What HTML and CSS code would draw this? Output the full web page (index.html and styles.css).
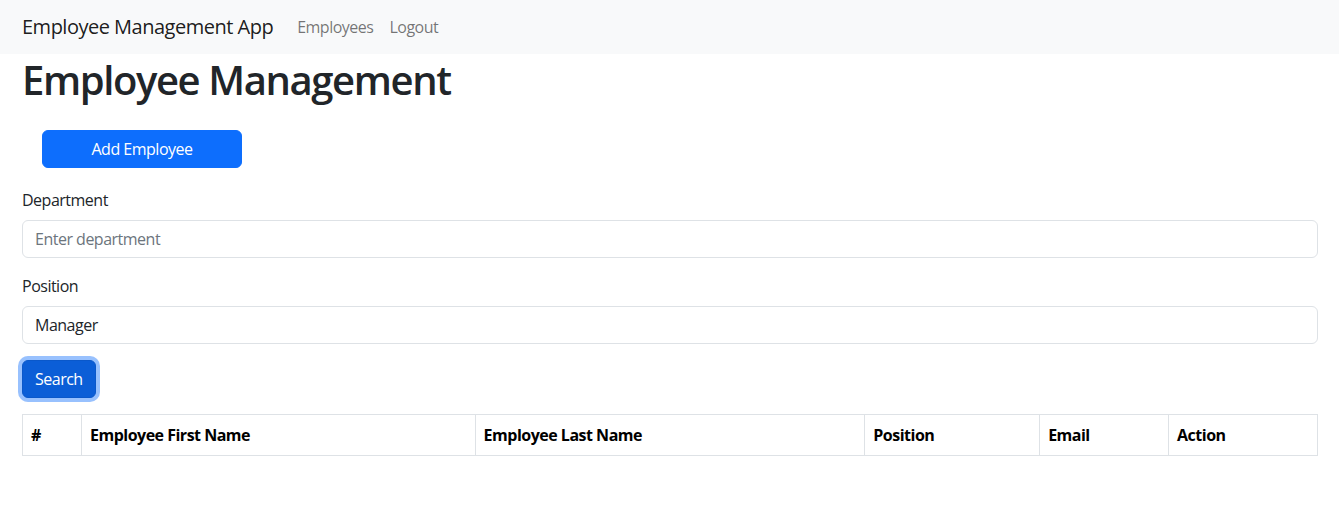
FILE: index.html
```html
<!DOCTYPE html>
<html lang="en">
<head>
<meta charset="utf-8">
<title>Employee Management App</title>
<link rel="stylesheet" href="styles.css">
</head>
<body>
<nav class="navbar">
  <span class="brand">Employee Management App</span>
  <a class="nav-link" href="#">Employees</a>
  <a class="nav-link" href="#">Logout</a>
</nav>
<main class="page">
  <h1 class="title">Employee Management</h1>
  <button class="btn btn-add" type="button">Add Employee</button>
  <div class="field">
    <label class="label" for="dept">Department</label>
    <input class="input" id="dept" type="text" placeholder="Enter department">
  </div>
  <div class="field">
    <label class="label" for="pos">Position</label>
    <input class="input" id="pos" type="text" value="Manager">
  </div>
  <button class="btn btn-search" type="button">Search</button>
  <table class="table">
    <thead>
      <tr>
        <th class="c-num">#</th>
        <th class="c-first">Employee First Name</th>
        <th class="c-last">Employee Last Name</th>
        <th class="c-pos">Position</th>
        <th class="c-email">Email</th>
        <th class="c-action">Action</th>
      </tr>
    </thead>
  </table>
</main>
</body>
</html>
```

FILE: styles.css
```css
* { box-sizing: border-box; }
html, body { margin: 0; padding: 0; }
body {
  font-family: "Open Sans", "Noto Sans", sans-serif;
  font-size: 16px;
  line-height: 1.5;
  letter-spacing: -0.5px;
  color: #212529;
  background: #fff;
}
.navbar {
  background: #f8f9fa;
  height: 54px;
  display: flex;
  align-items: center;
  padding: 0 22px;
}
.brand {
  font-size: 20px;
  letter-spacing: -0.5px;
  color: rgba(0,0,0,.9);
  margin-right: 16px;
  line-height: 30px;
}
.nav-link {
  color: rgba(0,0,0,.55);
  text-decoration: none;
  padding: 8px 8px;
  font-size: 16px;
}
.page {
  padding: 0 21px 0 22px;
}
.title {
  font-size: 40px;
  font-weight: 600;
  letter-spacing: -1.4px;
  line-height: 1.2;
  margin: 0 0 8px;
  padding: 2px 0 6px;
}
.btn {
  display: block;
  font-family: inherit;
  font-size: 16px;
  letter-spacing: inherit;
  line-height: 24px;
  color: #fff;
  border: 1px solid #0d6efd;
  background: #0d6efd;
  border-radius: 6px;
  padding: 6px 12px;
}
.btn-add {
  width: 200px;
  margin: 20px;
}
.btn-search {
  background: #0b5ed7;
  border-color: #0a58ca;
  box-shadow: 0 0 0 4px rgba(49,132,253,.5);
  margin-bottom: 16px;
}
.field { margin-bottom: 16px; }
.label {
  display: block;
  margin-bottom: 8px;
}
.input {
  display: block;
  width: 100%;
  font-family: inherit;
  font-size: 16px;
  letter-spacing: inherit;
  line-height: 24px;
  color: #212529;
  padding: 6px 12px;
  border: 1px solid #dee2e6;
  border-radius: 6px;
  background: #fff;
}
.input::placeholder { color: #6c757d; }
.table {
  width: 100%;
  border-collapse: collapse;
  color: #000;
}
.table th {
  border: 1px solid #dee2e6;
  padding: 8px;
  text-align: left;
  font-weight: 700;
  line-height: 24px;
}
.c-num { width: 59px; }
.c-first { width: 394px; }
.c-last { width: 390px; }
.c-pos { width: 175px; }
.c-email { width: 129px; }
.c-action { width: 149px; }
```
